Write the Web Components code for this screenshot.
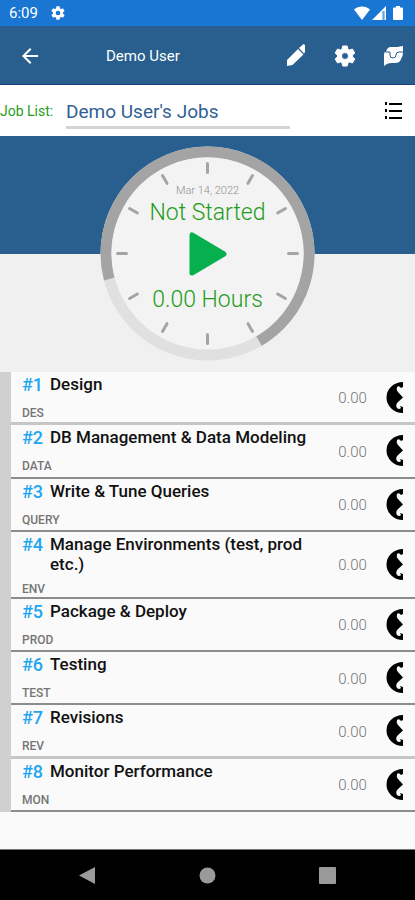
<!DOCTYPE html>
<html lang="en">
<head>
<meta charset="utf-8">
<meta name="viewport" content="width=device-width, initial-scale=1">
<title>Demo User's Jobs</title>
<style>
  :root {
    --statusBlue: #1976d2;
    --barBlue: #285f8f;
    --lineBlue: #1c3f7c;
    --green: #1f9d1a;
    --playGreen: #06b04f;
    --jobBlue: #1fa6f0;
    --surface: #fafafa;
    --rail: #d0d0d0;
    --hero: #f0f0f0;
  }

  body {
    margin: 0;
    font-family: Roboto, "Liberation Sans", sans-serif;
    background-color: var(--surface);
  }
</style>
</head>
<body>
<jobs-screen></jobs-screen>

<script>
const gearPath = 'M19.4 13c0-.3.1-.6.1-1s0-.7-.1-1l2.1-1.6c.2-.2.2-.4.1-.6l-2-3.5c-.1-.2-.4-.3-.6-.2l-2.5 1c-.5-.4-1.1-.7-1.7-1L14.5 2.4c0-.2-.2-.4-.5-.4h-4c-.3 0-.5.2-.5.4L9.1 5.1c-.6.2-1.2.6-1.7 1l-2.5-1c-.2-.1-.5 0-.6.2l-2 3.5c-.1.2-.1.5.1.6L4.5 11c0 .3-.1.7-.1 1s0 .7.1 1l-2.1 1.6c-.2.2-.2.4-.1.6l2 3.5c.1.2.4.3.6.2l2.5-1c.5.4 1.1.7 1.7 1l.4 2.7c0 .2.2.4.5.4h4c.3 0 .5-.2.5-.4l.4-2.7c.6-.2 1.2-.6 1.7-1l2.5 1c.2.1.5 0 .6-.2l2-3.5c.1-.2.1-.5-.1-.6L19.4 13zM12 15.5a3.5 3.5 0 1 1 0-7 3.5 3.5 0 0 1 0 7z';

class StatusBarWebComponent extends HTMLElement {
  constructor() {
    super();
    this.attachShadow({ mode: 'open' });
    this.render();
  }

  render() {
    this.shadowRoot.innerHTML = `
      <style>
        :host {
          display: flex;
          align-items: center;
          height: 26px;
          padding: 0 12px 0 9px;
          gap: 12px;
          box-sizing: border-box;
          background-color: var(--statusBlue);
          color: #fff;
          font-size: 15px;
        }
        svg { display: block; fill: currentColor; }
        .status_bar_system { display: flex; margin-left: auto; gap: 2px; }
      </style>
      <span><slot></slot></span>
      <svg width="16" height="16" viewBox="0 0 24 24"><path d="${gearPath}"/></svg>
      <div class="status_bar_system">
        <svg width="16" height="14" viewBox="0 0 16 14"><path d="M8 14L0 3.5C4.5-.5 11.5-.5 16 3.5z"/></svg>
        <svg width="14" height="14" viewBox="0 0 14 14"><path d="M0 14L14 0v14h-1.5V5h-2v9z"/><path d="M10.5 5h2v9h-2z" opacity=".35"/></svg>
        <svg width="15" height="14" viewBox="0 0 15 14"><path d="M8 0h4v1.5h2a1 1 0 0 1 1 1V13a1 1 0 0 1-1 1H6a1 1 0 0 1-1-1V2.5a1 1 0 0 1 1-1h2z"/></svg>
      </div>
    `;
  }
}

customElements.define('status-bar', StatusBarWebComponent);

class AppBarWebComponent extends HTMLElement {
  constructor() {
    super();
    this.attachShadow({ mode: 'open' });
    this.render();
  }

  render() {
    this.shadowRoot.innerHTML = `
      <style>
        :host {
          display: flex;
          align-items: center;
          height: 59px;
          padding: 1px 9px 0 18px;
          box-sizing: border-box;
          background-color: var(--barBlue);
          border-bottom: 1px solid var(--lineBlue);
          color: #fff;
        }
        h1 {
          flex: 1;
          margin: 0;
          padding-left: 64px;
          font-size: 15px;
          font-weight: 400;
        }
        .app_bar_actions { display: flex; gap: 25px; }
        button {
          padding: 0;
          border: 0;
          background: none;
          color: inherit;
        }
        svg { display: block; fill: currentColor; }
        .app_bar_gear { stroke: currentColor; }
        .app_bar_fold { fill: none; stroke: var(--barBlue); }
      </style>
      <button aria-label="Back">
        <svg width="24" height="24" viewBox="0 0 24 24"><path d="M20 11H7.8l5.6-5.6L12 4l-8 8 8 8 1.4-1.4L7.8 13H20z"/></svg>
      </button>
      <h1><slot></slot></h1>
      <div class="app_bar_actions">
        <button aria-label="Edit">
          <svg width="24" height="24" viewBox="0 0 24 24"><path d="M3 22v-6L14 5l5.5 5.5L8.5 21zM15 4l4.5-4L21 1v7l-1 1.5z"/></svg>
        </button>
        <button aria-label="Settings">
          <svg width="24" height="24" viewBox="0 0 24 24"><path class="app_bar_gear" d="${gearPath}"/></svg>
        </button>
        <button aria-label="Sync">
          <svg width="24" height="24" viewBox="0 0 24 24"><path d="M2 22V10Q2 8 4 8 5 3 9 3h6l6-1v7q0 3-2 6-1 4-6 4H9q-4 0-7 3z"/><path class="app_bar_fold" d="M4 8h4v3q0 3 3 3t3-3q0-3 3-3h4"/></svg>
        </button>
      </div>
    `;
  }
}

customElements.define('app-bar', AppBarWebComponent);

class JobPickerWebComponent extends HTMLElement {
  constructor() {
    super();
    this.attachShadow({ mode: 'open' });
    this.render();
  }

  render() {
    this.shadowRoot.innerHTML = `
      <style>
        :host {
          display: flex;
          align-items: center;
          height: 51px;
          padding-right: 9px;
          background-color: #fff;
        }
        label {
          flex: 0 0 66px;
          color: var(--green);
          font-size: 14px;
        }
        input {
          flex: 1;
          min-width: 0;
          height: 36px;
          margin-right: 91px;
          padding: 4px 0 0;
          border: 0;
          border-bottom: 3px solid #d4d4d4;
          box-sizing: border-box;
          background: none;
          color: #305f96;
          font: 19px Roboto, "Liberation Sans", sans-serif;
        }
        button { padding: 0; border: 0; background: none; }
        svg { display: block; }
      </style>
      <label for="job_list">Job List:</label>
      <input id="job_list" type="text" value="${this.getAttribute('value') ?? ''}">
      <button aria-label="Show list">
        <svg width="25" height="24" viewBox="0 0 25 24"><path d="M4 3h2v3H4zM4 10h2v3H4zM4 17h2v3H4zM8 4h13v2H8zM8 11h13v2H8zM8 18h13v2H8z"/></svg>
      </button>
    `;
  }
}

customElements.define('job-picker', JobPickerWebComponent);

class JobClockWebComponent extends HTMLElement {
  constructor() {
    super();
    this.attachShadow({ mode: 'open' });
    this.render();
  }

  ticks() {
    let lines = '';
    for (let angle = 0; angle < 360; angle += 30) {
      lines += `<line y1="-90" y2="-81" transform="rotate(${angle})"/>`;
    }
    return lines;
  }

  render() {
    this.shadowRoot.innerHTML = `
      <style>
        :host {
          display: grid;
          justify-content: center;
          padding: 10px 0 11px;
          background: linear-gradient(var(--barBlue) 50%, var(--hero) 50%);
        }
        .job_clock_dial, .job_clock_text { grid-area: 1 / 1; }
        .job_clock_dial { display: block; }
        .job_clock_text {
          display: flex;
          flex-direction: column;
          align-items: center;
          padding-top: 38px;
          color: var(--green);
          font-size: 23px;
          font-weight: 300;
          line-height: 30px;
        }
        .job_clock_date {
          color: #909090;
          font-size: 11px;
          line-height: 14px;
        }
        button {
          margin: 4px 0 9px;
          padding: 0;
          border: 0;
          background: none;
        }
        button svg {
          display: block;
          fill: var(--playGreen);
          stroke: var(--playGreen);
        }
      </style>
      <svg class="job_clock_dial" width="215" height="215" viewBox="-107.5 -107.5 215 215">
        <circle r="107" fill="#e0e0e0"/>
        <path d="M-98.2 25.5A101.5 101.5 0 1 1 51.5 87.5" fill="none" stroke="#a4a4a4" stroke-width="11"/>
        <circle r="96" fill="#f3f3f3"/>
        <g stroke="#a4a4a4" stroke-width="3" stroke-linecap="round">${this.ticks()}</g>
      </svg>
      <div class="job_clock_text">
        <span class="job_clock_date"><slot name="date"></slot></span>
        <span><slot name="state"></slot></span>
        <button aria-label="Start">
          <svg width="38" height="44" viewBox="0 0 38 44"><path d="M3 3v38l32-19z" stroke-width="5" stroke-linejoin="round"/></svg>
        </button>
        <span><slot name="hours"></slot></span>
      </div>
    `;
  }
}

customElements.define('job-clock', JobClockWebComponent);

class JobItemWebComponent extends HTMLElement {
  constructor() {
    super();
    this.attachShadow({ mode: 'open' });
    this.render();
  }

  render() {
    this.shadowRoot.innerHTML = `
      <style>
        :host {
          display: flex;
          flex: 1 0 53px;
          align-items: center;
          padding: 0 12px 0 11px;
          box-sizing: border-box;
          border-bottom: 2px solid #8c8c8c;
          background-color: var(--surface);
        }
        :host([edge="soft"]) { border-bottom: 3px solid #c6c6c6; }
        .job_item_text {
          display: grid;
          grid-template-columns: 28px 1fr;
          flex: 1;
          align-self: flex-start;
          padding-top: 2px;
          line-height: 20px;
        }
        .job_item_number {
          color: var(--jobBlue);
          font-size: 18px;
          font-weight: 500;
          line-height: 22px;
        }
        .job_item_name {
          color: #111;
          font-size: 17px;
          font-weight: 500;
        }
        .job_item_code {
          grid-column: 1 / 3;
          padding-top: 9px;
          color: #757575;
          font-size: 12px;
          font-weight: 500;
          line-height: 16px;
        }
        :host([tall]) .job_item_code { padding-top: 7px; }
        .job_item_hours {
          flex: 0 0 68px;
          padding: 2px 0 0 1px;
          box-sizing: border-box;
          color: #757575;
          font-size: 15px;
          font-weight: 300;
          text-align: center;
        }
        button { padding: 0; border: 0; background: none; }
        svg { display: block; }
      </style>
      <div class="job_item_text">
        <span class="job_item_number">#${this.getAttribute('number')}</span>
        <span class="job_item_name"><slot></slot></span>
        <span class="job_item_code">${this.getAttribute('code')}</span>
      </div>
      <span class="job_item_hours">${this.getAttribute('hours')}</span>
      <button aria-label="Open job">
        <svg width="17" height="31" viewBox="0 0 17 31"><path d="M17 0V5L15 6Q13 3 11 5 10 8 12 10L17 15.5 12 20Q9 23 11 26 13 28 15 26L14 24 17 25V31A16.5 15.5 0 0 1 17 0z"/></svg>
      </button>
    `;
  }
}

customElements.define('job-item', JobItemWebComponent);

class SystemNavWebComponent extends HTMLElement {
  constructor() {
    super();
    this.attachShadow({ mode: 'open' });
    this.render();
  }

  render() {
    this.shadowRoot.innerHTML = `
      <style>
        :host {
          display: grid;
          grid-template-columns: repeat(3, 1fr);
          place-items: center;
          height: 51px;
          padding: 0 28px;
          box-sizing: border-box;
          border-top: 1px solid #777;
          background-color: #000;
        }
        button { padding: 0; border: 0; background: none; }
        svg { display: block; fill: #9a9a9a; }
      </style>
      <button aria-label="Back"><svg width="17" height="17" viewBox="0 0 17 17"><path d="M16 0v17L0 8.5z"/></svg></button>
      <button aria-label="Home"><svg width="17" height="17" viewBox="0 0 17 17"><circle cx="8.5" cy="8.5" r="8"/></svg></button>
      <button aria-label="Recent"><svg width="17" height="17" viewBox="0 0 17 17"><rect width="17" height="17" rx="1"/></svg></button>
    `;
  }
}

customElements.define('system-nav', SystemNavWebComponent);

class JobsScreenWebComponent extends HTMLElement {
  constructor() {
    super();
    this.attachShadow({ mode: 'open' });
    this.jobs = [
      { name: 'Design', code: 'DES', edge: 'soft' },
      { name: 'DB Management &amp; Data Modeling', code: 'DATA' },
      { name: 'Write &amp; Tune Queries', code: 'QUERY' },
      { name: 'Manage Environments (test, prod etc.)', code: 'ENV', tall: true },
      { name: 'Package &amp; Deploy', code: 'PROD' },
      { name: 'Testing', code: 'TEST' },
      { name: 'Revisions', code: 'REV', edge: 'soft' },
      { name: 'Monitor Performance', code: 'MON' }
    ];
    this.render();
  }

  renderJob(job, index) {
    return `
      <job-item number="${index + 1}" code="${job.code}" hours="0.00"
        edge="${job.edge ?? ''}" ${job.tall ? 'tall' : ''}>${job.name}</job-item>
    `;
  }

  render() {
    this.shadowRoot.innerHTML = `
      <style>
        :host {
          display: flex;
          flex-direction: column;
          min-height: 100vh;
        }
        main {
          display: flex;
          flex: 1;
          flex-direction: column;
          margin-bottom: 37px;
          padding-left: 11px;
          background-color: var(--rail);
        }
      </style>
      <status-bar>6:09</status-bar>
      <app-bar>Demo User</app-bar>
      <job-picker value="Demo User's Jobs"></job-picker>
      <job-clock>
        <span slot="date">Mar 14, 2022</span>
        <span slot="state">Not Started</span>
        <span slot="hours">0.00 Hours</span>
      </job-clock>
      <main>${this.jobs.map((job, index) => this.renderJob(job, index)).join('')}</main>
      <system-nav></system-nav>
    `;
  }
}

customElements.define('jobs-screen', JobsScreenWebComponent);
</script>
</body>
</html>
